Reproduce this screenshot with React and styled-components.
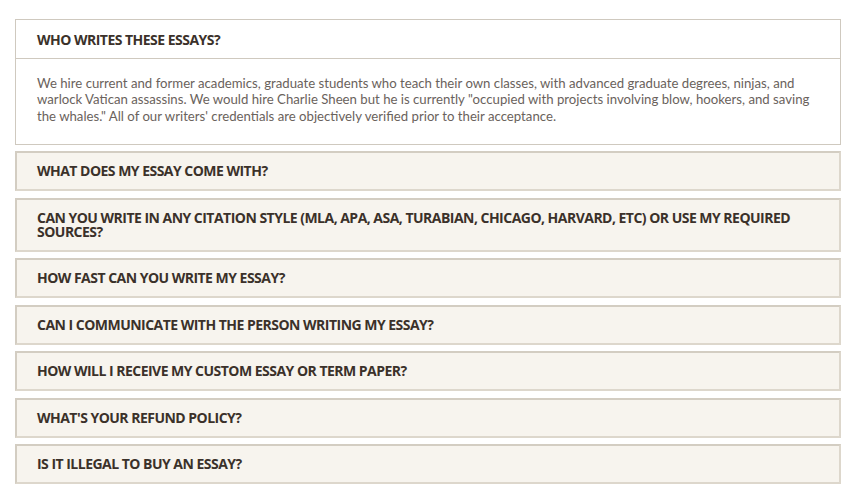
import React, { useState } from 'react';
import styled, { createGlobalStyle } from 'styled-components';

const GlobalStyle = createGlobalStyle`
  body {
    margin: 0;
    background: #ffffff;
    font-family: Lato, "Open Sans", sans-serif;
  }
`;

const Faq = styled.div`
  width: 826px;
  margin: 19px 0 0 15px;
  display: flex;
  flex-direction: column;
  gap: 6.5px;
`;

const Item = styled.div`
  border: ${(p) => (p.open ? '1px solid #cfc9bf' : '2px solid #ddd7cc')};
  border-top-color: ${(p) => (p.open ? '#cfc9bf' : '#d3cdc2')};
  border-left-color: ${(p) => (p.open ? '#cfc9bf' : '#d3cdc2')};
  background: ${(p) => (p.open ? '#ffffff' : '#f7f4ee')};
`;

const Question = styled.div`
  padding: ${(p) => (p.open ? '13px 21px 11px' : '11px 20px 11px')};
  font-family: "Open Sans", sans-serif;
  font-weight: 700;
  font-size: 14px;
  letter-spacing: -0.52px;
  line-height: 14px;
  color: #3b312a;
  text-transform: uppercase;
  cursor: pointer;
  border-bottom: ${(p) => (p.open ? '1px solid #cfc9bf' : 'none')};
`;

const Answer = styled.p`
  margin: 0;
  padding: 15.5px 21px 19.5px;
  font-family: Lato, sans-serif;
  font-size: 13.2px;
  line-height: 16.5px;
  color: #6a625c;
`;

const items = [
  {
    q: 'Who writes these essays?',
    a: 'We hire current and former academics, graduate students who teach their own classes, with advanced graduate degrees, ninjas, and warlock Vatican assassins. We would hire Charlie Sheen but he is currently "occupied with projects involving blow, hookers, and saving the whales." All of our writers\' credentials are objectively verified prior to their acceptance.',
  },
  { q: 'What does my essay come with?' },
  { q: 'Can you write in any citation style (MLA, APA, ASA, Turabian, Chicago, Harvard, etc) or use my required sources?' },
  { q: 'How fast can you write my essay?' },
  { q: 'Can I communicate with the person writing my essay?' },
  { q: 'How will I receive my custom essay or term paper?' },
  { q: "What's your refund policy?" },
  { q: 'Is it illegal to buy an essay?' },
];

export default function App() {
  const [open, setOpen] = useState(0);

  return (
    <>
      <GlobalStyle />
      <Faq>
        {items.map((item, i) => (
          <Item key={i} open={open === i}>
            <Question open={open === i} onClick={() => setOpen(open === i ? -1 : i)}>
              {item.q}
            </Question>
            {open === i && item.a && <Answer>{item.a}</Answer>}
          </Item>
        ))}
      </Faq>
    </>
  );
}
